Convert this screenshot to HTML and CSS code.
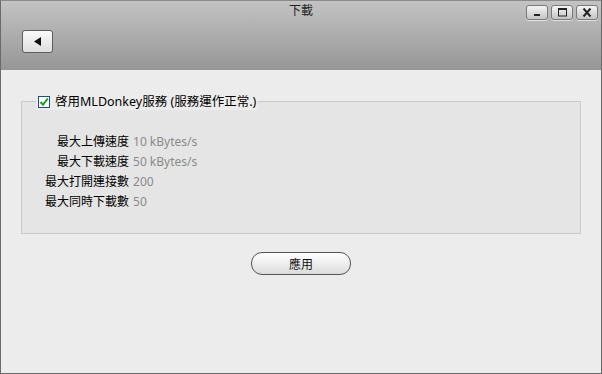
FILE: index.html
```html
<!DOCTYPE html>
<html lang="zh-Hant">
<head>
    <meta charset="UTF-8">
    <meta name="viewport" content="width=device-width, initial-scale=1.0">
    <title>下載</title>
    <link rel="stylesheet" href="styles.css">
</head>
<body>
<div class="window">
    <div class="titlebar">
        <div class="title-row">
            <span></span>
            <div class="title">下載</div>
            <div class="controls">
                <button class="ctl" title="Minimize">
                    <svg width="9" height="9" viewBox="0 0 9 9"><rect x="1" y="6" width="6" height="2" fill="#222"/></svg>
                </button>
                <button class="ctl" title="Maximize">
                    <svg width="11" height="9" viewBox="0 0 11 9"><rect x="1.5" y="0.5" width="8" height="7.5" fill="none" stroke="#222" stroke-width="1"/><rect x="1.5" y="0.5" width="8" height="1.5" fill="#222"/></svg>
                </button>
                <button class="ctl" title="Close">
                    <svg width="10" height="9" viewBox="0 0 10 9"><path d="M1.5 0.5 L8.5 8.5 M8.5 0.5 L1.5 8.5" stroke="#222" stroke-width="2"/></svg>
                </button>
            </div>
        </div>
        <button class="back-btn" title="Back">
            <svg width="8" height="9" viewBox="0 0 8 9"><polygon points="7,0 7,9 0,4.5" fill="#111"/></svg>
        </button>
    </div>

    <div class="content">
        <fieldset class="group">
            <legend class="group-title">
                <span class="checkbox">
                    <svg width="10" height="10" viewBox="0 0 10 10"><path d="M1.5 5 L4 7.8 L8.8 1.5" fill="none" stroke="#1c9a1c" stroke-width="2"/></svg>
                </span>
                <span>啓用MLDonkey服務 (服務運作正常.)</span>
            </legend>
            <div class="settings">
                <span class="label">最大上傳速度</span><span class="value">10 kBytes/s</span>
                <span class="label">最大下載速度</span><span class="value">50 kBytes/s</span>
                <span class="label">最大打開連接數</span><span class="value">200</span>
                <span class="label">最大同時下載數</span><span class="value">50</span>
            </div>
        </fieldset>
        <div class="actions">
            <button class="apply-btn">應用</button>
        </div>
    </div>
</div>
</body>
</html>
```
FILE: styles.css
```css
body {
    margin: 0;
    font-family: "Noto Sans", "Noto Sans CJK TC", sans-serif;
    font-size: 12px;
    color: #1a1a1a;
}

.window {
    height: 374px;
    box-sizing: border-box;
    border: 1px solid #6a6a6a;
    border-top-color: #8a8a8a;
    display: flex;
    flex-direction: column;
    background-color: #ececec;
}

/* Title bar */
.titlebar {
    height: 69px;
    background: linear-gradient(#c3c3c3, #969696);
    display: flex;
    flex-direction: column;
}

.title-row {
    display: grid;
    grid-template-columns: 1fr auto 1fr;
    height: 24px;
}

.title {
    font-size: 12px;
    line-height: 18px;
    padding-top: 1px;
    color: #222;
}

.controls {
    justify-self: end;
    display: flex;
    gap: 3px;
    padding: 4px 3px 0 0;
}

.ctl {
    width: 22px;
    height: 15px;
    padding: 0;
    border: 1px solid #7a7a7a;
    border-radius: 3px;
    background: linear-gradient(#f4f4f4, #c4c4c4);
    box-shadow: 0 1px 0 rgba(255, 255, 255, 0.6);
    display: flex;
    justify-content: center;
    align-items: center;
}

.back-btn {
    margin: 5px 0 0 21px;
    width: 31px;
    height: 23px;
    padding: 0;
    border: 1px solid #5e5e5e;
    border-radius: 3px;
    background: linear-gradient(#fbfbfb, #dedede);
    display: flex;
    justify-content: center;
    align-items: center;
}

/* Content */
.content {
    flex: 1;
    padding: 0 20px;
}

.group {
    margin: 23px 0 0 0;
    padding: 0 0 22px 0;
    border: 1px solid #c9c9c9;
    background-color: #e5e5e5;
}

.group-title {
    margin-left: 14px;
    padding: 0 2px;
    display: flex;
    align-items: center;
    gap: 5px;
    font-size: 12.5px;
    line-height: 17px;
    color: #000;
    background-color: #ececec;
}

.checkbox {
    width: 10px;
    height: 10px;
    border: 1px solid #1e4f7d;
    background: #fff;
    display: flex;
}

.settings {
    margin-top: 21px;
    padding-left: 23px;
    display: grid;
    grid-template-columns: auto 1fr;
    column-gap: 4px;
    grid-auto-rows: 20px;
    align-items: center;
}

.label {
    text-align: right;
    color: #000;
}

.value {
    color: #8a8a8a;
}

.actions {
    display: flex;
    justify-content: center;
    margin-top: 18px;
}

.apply-btn {
    width: 100px;
    height: 23px;
    border: 1px solid #555;
    border-radius: 11px;
    background: linear-gradient(#ffffff, #dcdcdc);
    font-family: "Noto Sans CJK TC", sans-serif;
    font-size: 12px;
    color: #111;
    padding: 0;
}
```
